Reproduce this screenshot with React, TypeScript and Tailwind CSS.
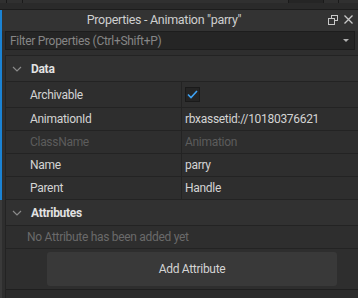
import React from "react";

const Chevron = () => (
  <svg width="10" height="6" viewBox="0 0 10 6" className="shrink-0">
    <path d="M1 1 L5 5 L9 1" fill="none" stroke="#8a8a8a" strokeWidth="1.2" />
  </svg>
);

const Row = ({ name, value, dim, h = "h-[23px]" }: { name: string; value: React.ReactNode; dim?: boolean; h?: string }) => (
  <div className={`flex ${h} border-b border-[#232323]`}>
    <div className={`w-[176px] pl-[24px] flex items-center border-r border-[#232323] ${dim ? "text-[#5c5c5c]" : "text-[#d4d4d4]"}`}>{name}</div>
    <div className={`flex-1 pl-[3px] flex items-center ${dim ? "text-[#5c5c5c]" : "text-[#d4d4d4]"}`}>{value}</div>
  </div>
);

const Header = ({ label }: { label: string }) => (
  <div className="flex h-[26px] items-center border-b border-[#232323] bg-[#313131] pl-[6px] gap-[9px]">
    <Chevron />
    <span className="font-bold text-[#e2e2e2]">{label}</span>
  </div>
);

export default function App() {
  return (
    <div className="w-[358px] h-[298px] bg-[#2e2e2e] overflow-hidden text-[12px] tracking-[-0.3px] flex flex-col" style={{ fontFamily: 'Roboto, "Noto Sans", sans-serif' }}>
      <div className="h-[10px] flex bg-[#2a2a2a] border-b border-[#1c1c1c]">
        <div className="w-[7px] h-[3px] bg-[#303030] border-r border-[#1a1a1a]" />
        <div className="w-[16px] h-[3px] bg-[#303030] border-r border-[#1a1a1a]" />
        <div className="w-[266px] h-[3px] bg-[#303030] border-r border-[#1a1a1a]" />
        <div className="w-[35px] h-[3px] bg-[#252525] border-r border-[#1a1a1a]" />
        <div className="w-[15px] h-[3px] bg-[#303030] border-r border-[#1a1a1a]" />
        <div className="flex-1 h-[3px] bg-[#303030]" />
      </div>
      <div className="flex flex-1">
        <div className="w-[2px] flex flex-col">
          <div className="h-[190px] bg-[#1b83d4]" />
          <div className="flex-1 bg-[#3a3a3a]" />
        </div>
        <div className="flex-1 flex flex-col bg-[#2e2e2e]">
          <div className="h-[21px] relative flex items-center justify-center bg-[#333333]">
            <span className="text-[#cfcfcf] text-[12.5px] mr-[32px]">Properties - Animation "parry"</span>
            <div className="absolute right-[20px] top-[5px]">
              <svg width="10" height="10" viewBox="0 0 10 10">
                <rect x="3.5" y="0.5" width="6" height="5" fill="none" stroke="#c8c8c8" />
                <rect x="0.5" y="3.5" width="6" height="6" fill="#333333" stroke="#c8c8c8" />
              </svg>
            </div>
            <div className="absolute right-[5px] top-[5px]">
              <svg width="9" height="9" viewBox="0 0 9 9">
                <path d="M0.5 0.5 L8.5 8.5 M8.5 0.5 L0.5 8.5" stroke="#c8c8c8" strokeWidth="1.3" />
              </svg>
            </div>
          </div>
          <div className="mx-[3px] h-[19px] bg-[#252525] border border-[#1d1d1d] flex items-center pl-[4px] pr-[5px]">
            <span className="flex-1 text-[#868686]">Filter Properties (Ctrl+Shift+P)</span>
            <svg width="6" height="3" viewBox="0 0 6 3"><path d="M0 0 L6 0 L3 3 Z" fill="#b0b0b0" /></svg>
          </div>
          <div className="mt-[5px] ml-[3px] flex-1 border-t border-l border-[#232323] flex flex-col">
            <Header label="Data" />
            <Row
              name="Archivable"
              h="h-[26px]"
              value={
                <div className="w-[15px] h-[15px] bg-[#242424] border border-[#1a1a1a] flex items-center justify-center">
                  <svg width="11" height="9" viewBox="0 0 11 9"><path d="M1 4.5 L4 7.5 L10 1" fill="none" stroke="#3fa3f5" strokeWidth="1.6" /></svg>
                </div>
              }
            />
            <Row name="AnimationId" value="rbxassetid://10180376621" />
            <Row name="ClassName" value="Animation" dim />
            <Row name="Name" value="parry" />
            <Row name="Parent" value="Handle" />
            <Header label="Attributes" />
            <div className="h-[23px] flex items-center pl-[21px] text-[#6a6a6a] border-b border-[#232323]">No Attribute has been added yet</div>
            <div className="h-[41px] flex items-center pl-[41px] pr-[21px] border-b border-[#1f1f1f]">
              <div className="flex-1 h-[34px] rounded-[3px] bg-[#393939] flex items-center justify-center text-[#d4d4d4]">Add Attribute</div>
            </div>
            <div className="flex-1 bg-[#2b2b2b]" />
          </div>
        </div>
      </div>
    </div>
  );
}
